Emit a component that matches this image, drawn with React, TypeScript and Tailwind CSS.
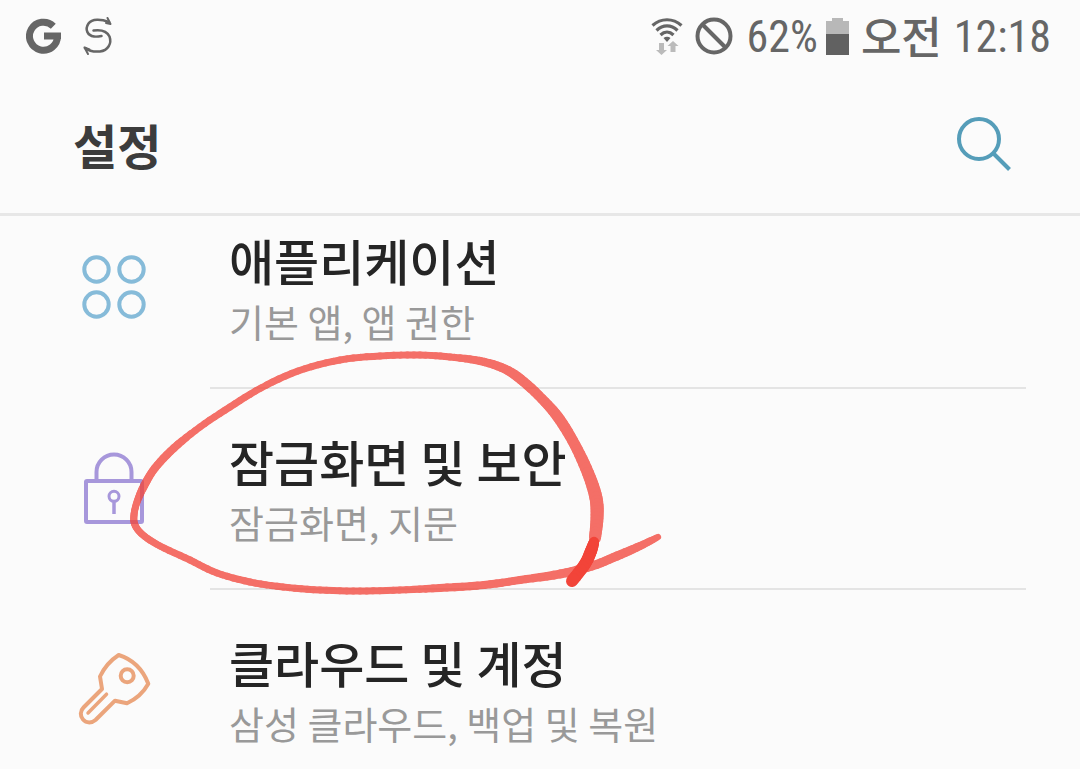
import type { ReactNode } from 'react';

interface SettingItem {
  id: string;
  title: string;
  summary: string;
  icon: ReactNode;
  marked?: boolean;
}

function AppsIcon() {
  return (
    <svg viewBox="0 0 76 76" className="mb-1 size-[76px]" fill="none" stroke="#86bbd9" strokeWidth="4" aria-hidden="true">
      <circle cx="20.5" cy="20.5" r="12.2" />
      <circle cx="55.5" cy="20.5" r="12.2" />
      <circle cx="20.5" cy="55.5" r="12.2" />
      <circle cx="55.5" cy="55.5" r="12.2" />
    </svg>
  );
}

function LockIcon() {
  return (
    <svg viewBox="0 0 76 76" className="mb-1 size-[76px]" fill="none" stroke="#a797db" strokeWidth="4" aria-hidden="true">
      <rect x="10" y="31" width="56" height="41" rx="1" />
      <path d="M20.5 31V22a17.5 17.5 0 0 1 35 0v9" />
      <circle cx="38" cy="46.3" r="5" strokeWidth="3" />
      <path d="M38 51v13" strokeWidth="3.5" />
    </svg>
  );
}

function KeyIcon() {
  return (
    <svg viewBox="0 0 76 76" className="mb-1 size-[76px]" fill="none" stroke="#eba57c" strokeWidth="4" strokeLinecap="round" strokeLinejoin="round" aria-hidden="true">
      <path d="M42.7 4C35 9 28 17 24 25.5L26 38L7.5 56.5C4 60 4 65 7 68.5C10.5 72.5 16 72 19.5 69L39 49.7L51 52.3C60 48 68 40.5 72.3 32.7C67 19 57 8.5 42.7 4Z" />
      <circle cx="51.2" cy="24.7" r="6.5" />
      <path d="M30.5 43.2L12 62" strokeWidth="3.5" />
    </svg>
  );
}

const ITEMS: SettingItem[] = [
  { id: 'apps', title: '애플리케이션', summary: '기본 앱, 앱 권한', icon: <AppsIcon /> },
  { id: 'lock', title: '잠금화면 및 보안', summary: '잠금화면, 지문', icon: <LockIcon />, marked: true },
  { id: 'cloud', title: '클라우드 및 계정', summary: '삼성 클라우드, 백업 및 복원', icon: <KeyIcon /> },
];

// x, y, pen width
type Point = [number, number, number];

const LOOP: Point[] = [
  [658, 537, 6], [640, 546, 8], [617, 556, 9], [592, 566, 9], [560, 574, 9], [520, 580, 8],
  [484, 585, 8], [440, 588, 8], [400, 590, 7], [360, 591, 7], [320, 590, 7], [283, 587, 7],
  [250, 582, 7], [217, 573, 7], [190, 560, 7], [160, 546, 7], [143, 535, 7], [135, 525, 7],
  [134, 515, 7], [137, 502, 7], [144, 486, 8], [155, 468, 8], [174, 448, 8], [200, 427, 7],
  [230, 407, 7], [261, 388, 7], [298, 371, 7], [340, 360, 7], [380, 356, 7], [420, 355, 7],
  [450, 357, 7], [480, 361, 8], [505, 369, 9], [524, 382, 10], [545, 402, 10], [560, 420, 11],
  [575, 445, 11], [588, 473, 12], [596, 498, 13], [597, 518, 13], [595, 538, 12],
];

const TAIL: Point[] = [[594, 542, 10], [591, 551, 12], [585, 564, 12], [572, 581, 12]];

function smooth(points: Point[], steps = 6): Point[] {
  const out: Point[] = [];
  for (let i = 0; i < points.length - 1; i++) {
    const a = points[Math.max(i - 1, 0)];
    const b = points[i];
    const c = points[i + 1];
    const d = points[Math.min(i + 2, points.length - 1)];
    for (let s = 0; s < steps; s++) {
      const t = s / steps;
      out.push([0, 1, 2].map((k) =>
        0.5 * (2 * b[k] + (c[k] - a[k]) * t + (2 * a[k] - 5 * b[k] + 4 * c[k] - d[k]) * t * t
          + (3 * b[k] - a[k] - 3 * c[k] + d[k]) * t * t * t),
      ) as Point);
    }
  }
  out.push(points[points.length - 1]);
  return out;
}

function Brush({ points }: { points: Point[] }) {
  const line = smooth(points);
  return (
    <>
      {line.slice(1).map(([x, y, w], i) => (
        <line key={i} x1={line[i][0]} y1={line[i][1]} x2={x} y2={y} strokeWidth={w} />
      ))}
    </>
  );
}

function PenMark() {
  return (
    <svg
      viewBox="0 340 680 280"
      className="pointer-events-none absolute -top-[49px] left-0 z-10 h-[280px] w-[680px]"
      stroke="#f24439"
      strokeLinecap="round"
      aria-hidden="true"
    >
      <g opacity="0.76"><Brush points={LOOP} /></g>
      <Brush points={TAIL} />
    </svg>
  );
}

function StatusBar() {
  return (
    <div className="flex h-[74px] shrink-0 items-center justify-between pr-[29px] pl-[26px] text-[#666]">
      <div className="flex items-center gap-[21px]">
        <svg viewBox="0 0 36 36" className="mb-0.5 size-9" fill="none" stroke="currentColor" strokeWidth="7" aria-label="Google">
          <path d="M27.3 8.2A14 14 0 1 0 31.5 18H18" />
          <path d="M18 18H35" strokeWidth="6" />
        </svg>
        <svg viewBox="0 0 30 40" className="mb-0.5 h-10 w-[30px]" fill="none" stroke="currentColor" strokeWidth="2.5" strokeLinecap="round" aria-label="S">
          <path d="M26 6C18 3 9 2.5 5.5 7.5C1.5 13.5 4.5 19.5 11 20.5C14 20.9 16 20.5 18.5 20" />
          <path d="M10.5 14.5C18 13.5 24 15 26.5 20.5C29 27.5 25 34.5 17 35.5C11 36 6 35 2 32" />
          <path d="M24.5 2L27.5 8L23 7M5 38L1.5 31.5L6.5 33.5" strokeWidth="2" strokeLinejoin="round" />
        </svg>
      </div>
      <div className="flex items-center">
        <svg viewBox="0 0 32 38" className="mb-0.5 h-[38px] w-8" fill="none" aria-label="Wi-Fi">
          <g stroke="#666" strokeWidth="3.2">
            <path d="M1.5 8.5C10 .8 22 .8 30.5 8.5" />
            <path d="M5.5 13.5C12 7.3 20 7.3 26.5 13.5" />
            <path d="M9.5 18C13.5 14.2 18.5 14.2 22.5 18" />
          </g>
          <path d="M16 25L12.5 21C14.5 19.3 17.5 19.3 19.5 21Z" fill="#666" />
          <path d="M8 26h5v7h3l-5.5 5L5 33h3zM19.5 35v-6h-3L22 24l5.5 5h-3v6z" fill="#bbb" />
        </svg>
        <svg viewBox="0 0 38 38" className="mb-0.5 ml-3 size-[38px]" fill="none" stroke="currentColor" strokeWidth="4" aria-label="차단">
          <circle cx="19" cy="19" r="16.5" />
          <path d="M7.5 7.5L30.5 30.5" />
        </svg>
        <span className="ml-3.5 font-['Roboto_Condensed','Liberation_Sans_Narrow',Roboto,sans-serif] text-[44px] leading-[48px]">62%</span>
        <svg viewBox="0 0 23 37" className="mr-3 mb-0.5 ml-2 h-[37px] w-[23px]" aria-label="배터리">
          <path d="M6 0H17V3H23V16H0V3H6Z" fill="#b8b8b8" />
          <path d="M0 16H23V37H0Z" fill="#616161" />
        </svg>
        <div className="flex items-center gap-3 text-[44px] leading-[48px]">
          <span className="mb-1 font-['Noto_Sans_CJK_KR',sans-serif] font-medium">오전</span>
          <span className="font-['Roboto_Condensed','Liberation_Sans_Narrow',Roboto,sans-serif]">12:18</span>
        </div>
      </div>
    </div>
  );
}

export default function App() {
  return (
    <div className="flex h-screen flex-col overflow-hidden bg-[#fbfbfb] font-['Noto_Sans_CJK_KR',sans-serif]">
      <StatusBar />
      <header className="flex h-[142px] shrink-0 items-center justify-between border-b-[3px] border-[#e7e7e7] pr-[68px] pl-[73px]">
        <h1 className="text-[48px] leading-[60px] font-bold text-[#3c3c3c]">설정</h1>
        <button type="button" aria-label="검색" className="cursor-pointer">
          <svg viewBox="0 0 56 56" className="size-14" fill="none" stroke="#559db9" strokeWidth="4">
            <circle cx="23" cy="23" r="20" />
            <path d="M37.5 37.5L53.5 53.5" />
          </svg>
        </button>
      </header>

      <main className="min-h-0 flex-1 overflow-hidden">
        <ul className="-mt-7">
          {ITEMS.map((item) => (
            <li key={item.id} className="relative">
              <a href={`#${item.id}`} className="flex items-center pr-[54px] pl-[76px]">
                {item.icon}
                <div className="ml-[58px] flex h-[201px] flex-1 flex-col border-b-2 border-[#e4e4e4] pt-[42px] pl-[19px]">
                  <span className="text-[49px] leading-[60px] font-medium text-[#252525]">{item.title}</span>
                  <span className="mt-[5px] text-[38px] leading-[52px] text-[#999]">{item.summary}</span>
                </div>
              </a>
              {item.marked && <PenMark />}
            </li>
          ))}
        </ul>
      </main>
    </div>
  );
}
